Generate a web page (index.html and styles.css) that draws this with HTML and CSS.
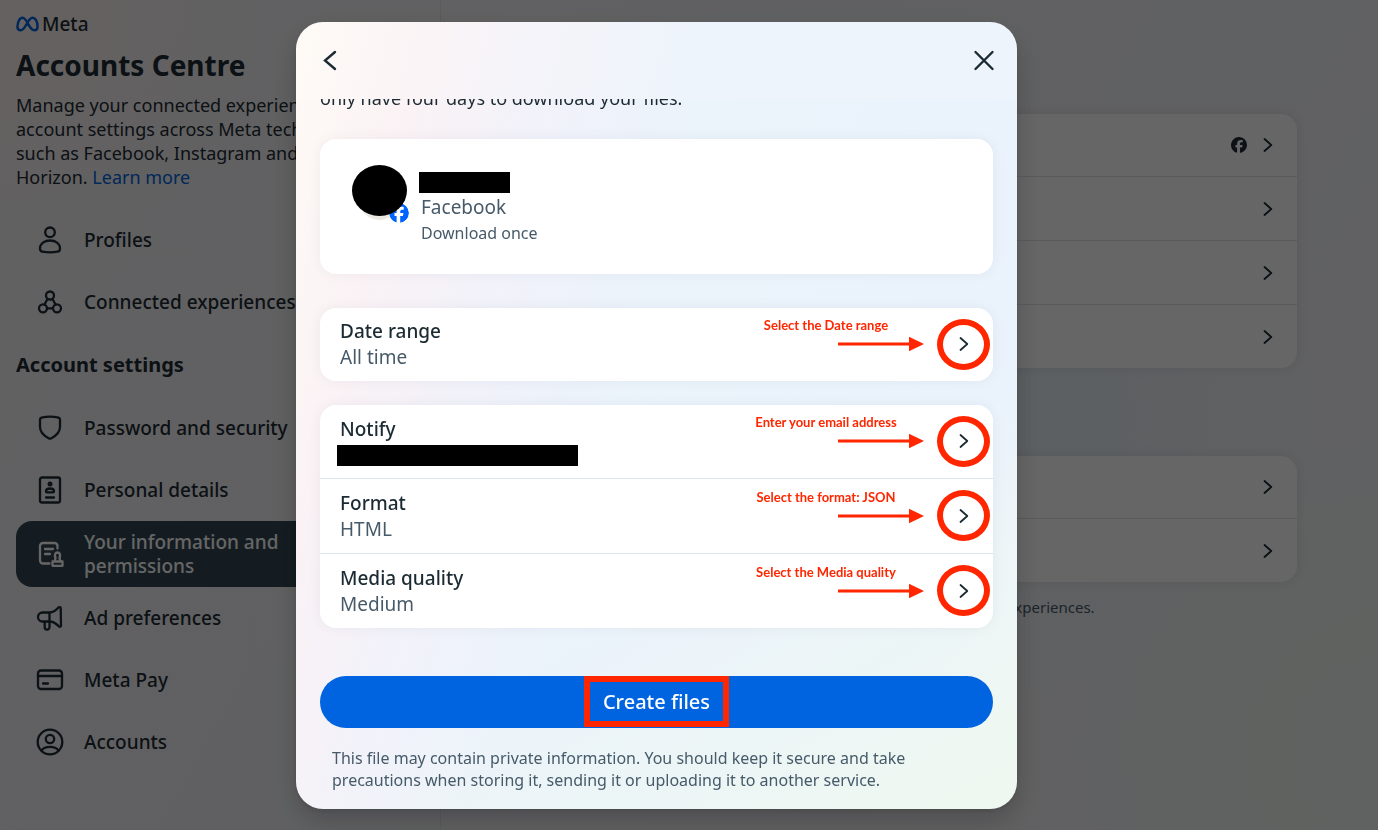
FILE: index.html
```html
<!DOCTYPE html>
<html lang="en-GB">
<head>
<meta charset="utf-8">
<meta name="viewport" content="width=device-width, initial-scale=1">
<title>Accounts Centre</title>
<link rel="stylesheet" href="styles.css">
</head>
<body>
<svg class="defs" aria-hidden="true">
  <symbol id="chevron" viewBox="0 0 10 16"><path d="M1.5 2 8.3 8 1.5 14" fill="none" stroke="currentColor" stroke-width="1.8" stroke-linecap="round" stroke-linejoin="round"/></symbol>
  <symbol id="arrow" viewBox="0 0 86 16"><path d="M0 8h73" stroke="#ff2600" stroke-width="3"/><path d="M71 .8 86 8 71 15.2z" fill="#ff2600"/></symbol>
  <symbol id="facebook" viewBox="0 0 20 20"><path fill="currentColor" d="M20 10a10 10 0 1 0-12.4 9.7v-6.6H5.5V10h2.1V8.7c0-3.4 1.5-5 4.9-5 .6 0 1.7.1 2.200.3v2.800c-.3 0-.7-.1-1.200-.1-1.700 0-2.300.6-2.300 2.300V10h3.300l-.6 3.100h-2.700v6.800A10 10 0 0 0 20 10z"/></symbol>
</svg>

<div class="page">
  <aside class="sidebar">
    <div class="brand">
      <svg class="brand-mark" viewBox="0 0 24 16" aria-hidden="true"><path d="M1.500 11.200C1.500 6.500 3.500 1.500 6.800 1.500c5 0 6.800 13 12.200 13 2.400 0 3.500-1.700 3.500-4.200C22.500 5.600 20.400 1.500 17.200 1.500c-5.200 0-7 13-12.200 13-2.200 0-3.500-1.200-3.500-3.300z" fill="none" stroke="#0064e0" stroke-width="2.600"/></svg>
      <span>Meta</span>
    </div>
    <h1>Accounts Centre</h1>
    <p class="intro">Manage your connected experiences and account settings across Meta technologies such as Facebook, Instagram and Meta Horizon. <a href="#learn">Learn more</a></p>
    <nav>
      <a class="nav-item" href="#profiles">
        <svg viewBox="0 0 28 28" aria-hidden="true"><circle cx="14" cy="6.300" r="4.800"/><path d="M4 22.500c0-4.800 4.500-8 10-8s10 3.200 10 8c0 2-1 3-2.500 3.200-4.800.8-10.200.8-15 0C5 25.500 4 24.500 4 22.500z"/></svg>
        <span>Profiles</span></a>
      <a class="nav-item" href="#connected">
        <svg viewBox="0 0 28 28" aria-hidden="true"><circle cx="14" cy="7.500" r="4"/><circle cx="7" cy="20.300" r="4"/><circle cx="21" cy="20.300" r="4"/><path d="M11.500 11 8.500 16.500M16.500 11l3 5.500M11 20.300h6"/></svg>
        <span>Connected experiences</span></a>
      <h2>Account settings</h2>
      <a class="nav-item" href="#security">
        <svg viewBox="0 0 28 28" aria-hidden="true"><path d="M4 5.500c0-1 .6-1.600 1.500-1.800 5.500-1.300 11.500-1.300 17 0 .9.200 1.500.8 1.500 1.800v7.500c0 5.500-4.500 9-8.600 11.300-.9.500-1.900.5-2.800 0C8.500 22 4 18.500 4 13z"/></svg>
        <span>Password and security</span></a>
      <a class="nav-item" href="#details">
        <svg viewBox="0 0 28 28" aria-hidden="true"><rect x="4" y="1.500" width="20" height="25" rx="2"/><circle cx="14" cy="8" r="2.500" class="solid"/><path d="M10 15.500c0-2 1.800-3 4-3s4 1 4 3c0 .6-.4.900-1 .9h-6c-.6 0-1-.3-1-.9zM10 21.500h8"/></svg>
        <span>Personal details</span></a>
      <a class="nav-item active" href="#information" aria-current="page">
        <svg viewBox="0 0 28 28" aria-hidden="true"><path d="M13.500 23.500H7a3 3 0 0 1-3-3V6a3 3 0 0 1 3-3h11.500a3 3 0 0 1 3 3v2.500M9 9h8M9 14h5M16.500 25.800v-4.300h10v4.300zM18.700 21.300l.8-3.300c-1.500-3.800.2-5.500 2-5.500s3.500 1.700 2 5.500l.8 3.300"/></svg>
        <span>Your information and permissions</span></a>
      <a class="nav-item" href="#ads">
        <svg viewBox="0 0 28 28" aria-hidden="true"><path d="M6.500 8.500h7.300c3 0 6-2 8.600-4.900 1-1 2.300-.5 2.300.8l.3 17c0 1.300-1.200 1.800-2.300.8-2.700-2.600-5-4.700-8.900-4.700H6.500a4.500 4.500 0 0 1 0-9zM13.500 8.500v14.700a2.400 2.400 0 0 1-4.800 0v-5.700"/></svg>
        <span>Ad preferences</span></a>
      <a class="nav-item" href="#pay">
        <svg viewBox="0 0 28 28" aria-hidden="true"><rect x="2" y="4.500" width="24" height="18.500" rx="3"/><path d="M2 10h24M7 17.500h5"/></svg>
        <span>Meta Pay</span></a>
      <a class="nav-item" href="#accounts">
        <svg viewBox="0 0 28 28" aria-hidden="true"><circle cx="14" cy="14" r="12.300"/><circle cx="14" cy="11" r="4.200"/><path d="M5.500 22.500c1.800-2.500 5-3.700 8.500-3.700s6.700 1.200 8.500 3.700"/></svg>
        <span>Accounts</span></a>
    </nav>
  </aside>

  <main class="main">
    <div class="group">
      <button class="link-row" aria-label="Information"><svg class="fb" aria-hidden="true"><use href="#facebook"/></svg><svg class="chev" aria-hidden="true"><use href="#chevron"/></svg></button>
      <button class="link-row" aria-label="Transfer"><svg class="chev" aria-hidden="true"><use href="#chevron"/></svg></button>
      <button class="link-row" aria-label="Search history"><svg class="chev" aria-hidden="true"><use href="#chevron"/></svg></button>
      <button class="link-row" aria-label="Activity"><svg class="chev" aria-hidden="true"><use href="#chevron"/></svg></button>
    </div>
    <div class="group">
      <button class="link-row" aria-label="Apps"><svg class="chev" aria-hidden="true"><use href="#chevron"/></svg></button>
      <button class="link-row" aria-label="Permissions"><svg class="chev" aria-hidden="true"><use href="#chevron"/></svg></button>
    </div>
    <p class="group-note">Control what information Meta technologies can use to influence your experiences.</p>
  </main>
</div>

<div class="overlay">
  <section class="dialog" role="dialog" aria-modal="true" aria-label="Create files">
    <header class="dialog-head">
      <button class="icon-btn" aria-label="Back"><svg viewBox="0 0 24 24" aria-hidden="true"><path d="M18 4 8 12.500 18 21"/></svg></button>
      <button class="icon-btn" aria-label="Close"><svg viewBox="0 0 24 24" aria-hidden="true"><path d="M3.500 4 20.500 21M20.500 4 3.500 21"/></svg></button>
    </header>
    <div class="dialog-body">
      <p class="lead">only have four days to download your files.</p>

      <div class="card profile">
        <div class="avatar"><svg class="badge" aria-hidden="true"><use href="#facebook"/></svg></div>
        <div class="profile-text">
          <span class="redacted name"></span>
          <span class="sub">Facebook</span>
          <span class="small">Download once</span>
        </div>
      </div>

      <div class="card">
        <div class="row">
          <div class="row-text"><span class="title">Date range</span><span class="sub">All time</span></div>
          <div class="note"><span>Select the Date range</span><svg aria-hidden="true"><use href="#arrow"/></svg></div>
          <button class="ring" aria-label="Date range"><svg class="chev" aria-hidden="true"><use href="#chevron"/></svg></button>
        </div>
      </div>

      <div class="card">
        <div class="row">
          <div class="row-text"><span class="title">Notify</span><span class="redacted email"></span></div>
          <div class="note"><span>Enter your email address</span><svg aria-hidden="true"><use href="#arrow"/></svg></div>
          <button class="ring" aria-label="Notify"><svg class="chev" aria-hidden="true"><use href="#chevron"/></svg></button>
        </div>
        <div class="row">
          <div class="row-text"><span class="title">Format</span><span class="sub">HTML</span></div>
          <div class="note"><span>Select the format: JSON</span><svg aria-hidden="true"><use href="#arrow"/></svg></div>
          <button class="ring" aria-label="Format"><svg class="chev" aria-hidden="true"><use href="#chevron"/></svg></button>
        </div>
        <div class="row">
          <div class="row-text"><span class="title">Media quality</span><span class="sub">Medium</span></div>
          <div class="note"><span>Select the Media quality</span><svg aria-hidden="true"><use href="#arrow"/></svg></div>
          <button class="ring" aria-label="Media quality"><svg class="chev" aria-hidden="true"><use href="#chevron"/></svg></button>
        </div>
      </div>

      <button class="create"><span>Create files</span></button>
      <p class="disclaimer">This file may contain private information. You should keep it secure and take precautions when storing it, sending it or uploading it to another service.</p>
    </div>
  </section>
</div>
</body>
</html>
```
FILE: styles.css
```css
* { box-sizing: border-box; }

body {
  margin: 0;
  height: 100vh;
  overflow: hidden;
  color: #1c2b33;
  font: 18px/24px "Noto Sans", "Open Sans", sans-serif;
}

h1, h2, p { margin: 0; }
a { color: #0064e0; text-decoration: none; }
button { font: inherit; color: inherit; border: 0; padding: 0; background: none; cursor: pointer; }
.defs { position: absolute; width: 0; height: 0; }

.page {
  display: grid;
  grid-template-columns: 441px 1fr;
  min-height: 100vh;
  background:
    radial-gradient(circle at 0 0, #fdf3f0 0, #fdf3f000 260px),
    radial-gradient(circle at 100% 90%, #edf6ef 0, #edf6ef00 340px),
    radial-gradient(circle at 76% 50%, #e6f0f5 0, #e6f0f500 280px),
    linear-gradient(120deg, #f5f2f4, #f0f1f5 40%, #f2f2f5);
}

.sidebar { padding: 12px 16px; border-right: 1px solid #dee3e9; }
.brand { display: flex; align-items: center; gap: 3px; font-size: 19px; font-weight: 500; }
.brand-mark { width: 23px; height: 16px; }
h1 { margin-top: 12px; font-size: 28px; line-height: 34px; font-weight: 700; }
.intro { max-width: 370px; margin: 11px 0 20px; }
h2 { padding: 20px 0; font-size: 20px; line-height: 24px; font-weight: 700; }

.nav-item {
  display: flex;
  align-items: center;
  gap: 20px;
  min-height: 62px;
  padding: 9px 20px;
  border-radius: 16px;
  color: inherit;
  font-weight: 500;
  font-size: 19px;
}
.nav-item span { max-width: 220px; }
.nav-item svg { flex: none; width: 28px; height: 28px; fill: none; stroke: currentColor; stroke-width: 2.3; stroke-linecap: round; stroke-linejoin: round; }
.nav-item svg .solid { fill: currentColor; stroke: none; }
.nav-item.active { background: #344854; color: #fff; }

.main { padding: 114px 81px 0 56px; }
.group { margin-bottom: 88px; border-radius: 16px; background: #fff; box-shadow: 0 0 12px #1c2b331a; }
.link-row { display: flex; align-items: center; justify-content: flex-end; gap: 16px; width: 100%; height: 62px; padding-right: 24px; }
.link-row + .link-row { height: 64px; border-top: 1px solid #dee3e9; }
.fb { width: 16px; height: 16px; }
.chev { width: 10px; height: 16px; }
.group-note { margin-top: -74px; padding-left: 12px; color: #465a69; font-size: 15px; line-height: 22px; }

.overlay {
  position: fixed;
  inset: 0;
  display: flex;
  align-items: center;
  justify-content: center;
  padding-right: 65px;
  background: rgba(0, 0, 0, .6);
}
.dialog {
  width: 721px;
  max-width: 100%;
  border-radius: 27px;
  overflow: hidden;
  background:
    linear-gradient(150deg, #eef7f100 64%, #eef8f1 96%),
    linear-gradient(105deg, #fffaf5 0, #faf2f5 15%, #f2f2fa 28%, #ebf3fb 45%, #eaf2fc 88%, #f1f5fd);
  box-shadow: 0 12px 28px rgba(0, 0, 0, .2), 0 2px 4px rgba(0, 0, 0, .1);
}
.dialog-head { display: flex; justify-content: space-between; padding: 26px 21px 27px; background: #ffffff26; }
.icon-btn { display: flex; }
.icon-btn svg { width: 24px; height: 24px; fill: none; stroke: currentColor; stroke-width: 2.4; stroke-linecap: round; }
.dialog-body { overflow: hidden; padding: 0 24px 18px; }
.lead { margin: -13px 0 29px; }

.card { margin-bottom: 24px; border-radius: 16px; background: #fff; box-shadow: 0 0 14px #1c2b330d; }
.profile { display: flex; gap: 12px; padding: 26px 32px 29px; margin-bottom: 34px; }
.avatar { position: relative; width: 55px; height: 51px; }
.avatar::before { content: ""; position: absolute; inset: 4px 5px -4px 5px; border-radius: 50%; background: #ece8e2; }
.avatar::after { content: ""; position: absolute; inset: 0; border-radius: 50%; background: #000; }
.badge { position: absolute; right: -2px; bottom: -7px; width: 20px; height: 20px; border-radius: 50%; background: #fff; color: #0064ff; }
.profile-text { display: flex; flex-direction: column; padding-top: 7px; }
.redacted { background: #000; }
.name { width: 91px; height: 21px; margin-bottom: 2px; }
.profile-text .sub, .small { padding-left: 2px; }
.small { margin-top: 2px; color: #465a69; font-size: 16px; line-height: 24px; }
.sub { color: #465a69; font-size: 19px; }

.row { display: flex; align-items: center; gap: 13px; height: 73px; padding: 0 3px 0 17px; }
.row + .row { height: 75px; border-top: 1px solid #dee3e9; }
.row-text { display: flex; flex: 1; flex-direction: column; gap: 2px; }
.row-text .title, .row-text .sub { padding-left: 3px; }
.title { font-size: 19px; font-weight: 500; }
.email { width: 241px; height: 21px; margin-top: 2px; }
.note { display: flex; flex-direction: column; gap: 2px; width: 172px; padding-bottom: 20px; color: #ff2600; font: 700 13px/18px Lato, sans-serif; }
.note span { width: 148px; text-align: center; white-space: nowrap; }
.note svg { align-self: flex-end; width: 86px; height: 16px; }
.ring { display: grid; place-items: center; width: 53px; height: 51px; border: 6px solid #ff2600; border-radius: 50%; }

.create { display: grid; place-items: center; width: 100%; height: 52px; margin-top: 48px; border-radius: 26px; background: #0064e0; color: #fff; font-size: 20px; font-weight: 500; }
.create span { padding: 8px 13px 7px; border: 6px solid #ff2600; }
.disclaimer { padding: 19px 60px 0 12px; color: #465a69; font-size: 16px; line-height: 22px; }
```
